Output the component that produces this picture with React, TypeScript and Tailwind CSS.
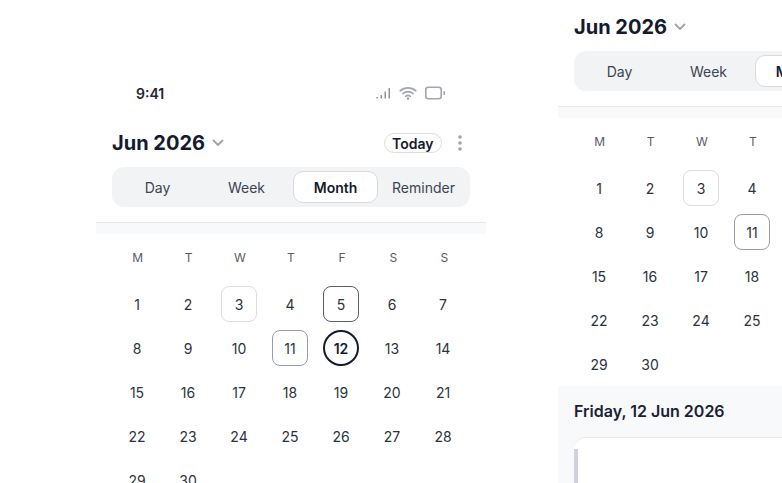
const weekdays = ['M', 'T', 'W', 'T', 'F', 'S', 'S']
const days = Array.from({ length: 30 }, (_, i) => i + 1)

function dayClass(day: number) {
  if (day === 3) return 'rounded-[8px] border border-[#dcdde3]'
  if (day === 5) return 'rounded-[8px] border border-[#5c5f66]'
  if (day === 11) return 'rounded-[8px] border border-[#9a9ca6]'
  if (day === 12) return 'rounded-full border-2 border-[#141b2d] font-semibold text-[#141b2d]'
  return ''
}

function StatusBar() {
  return (
    <div className="flex h-[57px] items-start justify-between pl-[40px] pr-[40px] pt-[16px]">
      <span className="mt-[1px] text-[14px] font-semibold leading-[14px] text-[#1f2533]">9:41</span>
      <div className="flex items-center gap-[8px]">
        <svg width="15" height="12" viewBox="0 0 15 12" fill="#8f929c">
          <rect x="0.5" y="10" width="1.5" height="1.5" />
          <rect x="4.5" y="8" width="1.5" height="3.5" />
          <rect x="8.5" y="4.5" width="1.5" height="7" />
          <rect x="12.5" y="1" width="1.5" height="10.5" />
        </svg>
        <svg width="18" height="14" viewBox="0 0 18 14" fill="none" stroke="#a3a6af" strokeWidth="1.7" strokeLinecap="round">
          <path d="M1.2 4.8C5.6 .8 12.4 .8 16.8 4.8" />
          <path d="M4 7.7C6.9 5 11.1 5 14 7.7" />
          <path d="M6.7 10.3C8 9.2 10 9.2 11.3 10.3" />
          <circle cx="9" cy="12.6" r="0.5" fill="#a3a6af" />
        </svg>
        <svg width="21" height="14" viewBox="0 0 21 14" fill="none">
          <rect x="0.8" y="1.3" width="15.4" height="11.4" rx="2.5" stroke="#a3a6af" strokeWidth="1.6" />
          <rect x="18.4" y="5" width="1.6" height="4" rx="0.7" fill="#a3a6af" />
        </svg>
      </div>
    </div>
  )
}

function CalendarScreen({ statusBar }: { statusBar?: boolean }) {
  return (
    <div className="w-[390px] shrink-0 bg-white">
      {statusBar && <StatusBar />}
      <div className="flex h-[32px] items-center justify-between px-4">
        <div className="flex items-center gap-[7px]">
          <span className="text-[20px] font-bold leading-none text-[#141b2d]">Jun 2026</span>
          <svg width="12" height="8" viewBox="0 0 12 8" fill="none" stroke="#9ea2ac" strokeWidth="1.8" strokeLinecap="round" strokeLinejoin="round">
            <path d="M1.5 1.5 6 6l4.5-4.5" />
          </svg>
        </div>
        <div className="flex items-center gap-[16px] pr-2">
          <button className="flex h-[20px] items-center rounded-full border border-[#dcdde3] px-[7.5px] text-[14px] font-semibold text-[#141b2d]">
            Today
          </button>
          <svg width="4" height="16" viewBox="0 0 4 16" fill="#9ea2ac">
            <circle cx="2" cy="2" r="1.8" />
            <circle cx="2" cy="8" r="1.8" />
            <circle cx="2" cy="14" r="1.8" />
          </svg>
        </div>
      </div>
      <div className="px-4 pt-2">
        <div className="grid h-[40px] grid-cols-4 items-center rounded-[12px] bg-[#f2f3f5] px-[1px] text-[14px] text-[#3d4350]">
          <span className="text-center">Day</span>
          <span className="text-center">Week</span>
          <span className="mx-[2px] flex h-[32px] items-center justify-center rounded-[10px] border border-[#d9dae0] bg-white font-semibold text-[#141b2d]">
            Month
          </span>
          <span className="pr-[2px] text-center">Reminder</span>
        </div>
      </div>
      <div className="mt-[15px] h-[12px] border-t border-[#e6e7eb] bg-[#f8f9fb]" />
      <div className="px-4">
        <div className="grid grid-cols-7 pt-[16px] pb-[20px]">
          {weekdays.map((d, i) => (
            <span key={i} className="h-[16px] text-center text-[12px] leading-[16px] text-[#565b67]">
              {d}
            </span>
          ))}
        </div>
        <div className="-ml-[0.5px] grid grid-cols-[repeat(7,51px)] gap-y-[8px]">
          {days.map((day) => (
            <div key={day} className="flex justify-center">
              <span className={`flex h-[36px] w-[36px] items-center justify-center text-[14px] text-[#2c3240] ${dayClass(day)}`}>
                {day}
              </span>
            </div>
          ))}
        </div>
      </div>
    </div>
  )
}

function Agenda() {
  return (
    <div className="mt-[4px] w-[390px] bg-[#f8f9fb] px-4 pt-[15px]">
      <p className="text-[16px] font-semibold leading-[20px] text-[#1a2133]">Friday, 12 Jun 2026</p>
      <div className="mt-[16px] flex h-[80px] rounded-t-[12px] border-t border-[#e6e7eb] bg-white">
        <div className="mt-[11px] h-[60px] w-[4px] bg-[#d1d1db]" />
      </div>
    </div>
  )
}

export default function App() {
  return (
    <div className="flex h-[483px] w-[782px] items-start gap-[72px] overflow-hidden bg-white pl-[96px] [font-family:Inter,sans-serif]">
      <div className="shrink-0 pt-[70px]">
        <CalendarScreen statusBar />
      </div>
      <div className="shrink-0 pt-[11px]">
        <CalendarScreen />
        <Agenda />
      </div>
    </div>
  )
}
